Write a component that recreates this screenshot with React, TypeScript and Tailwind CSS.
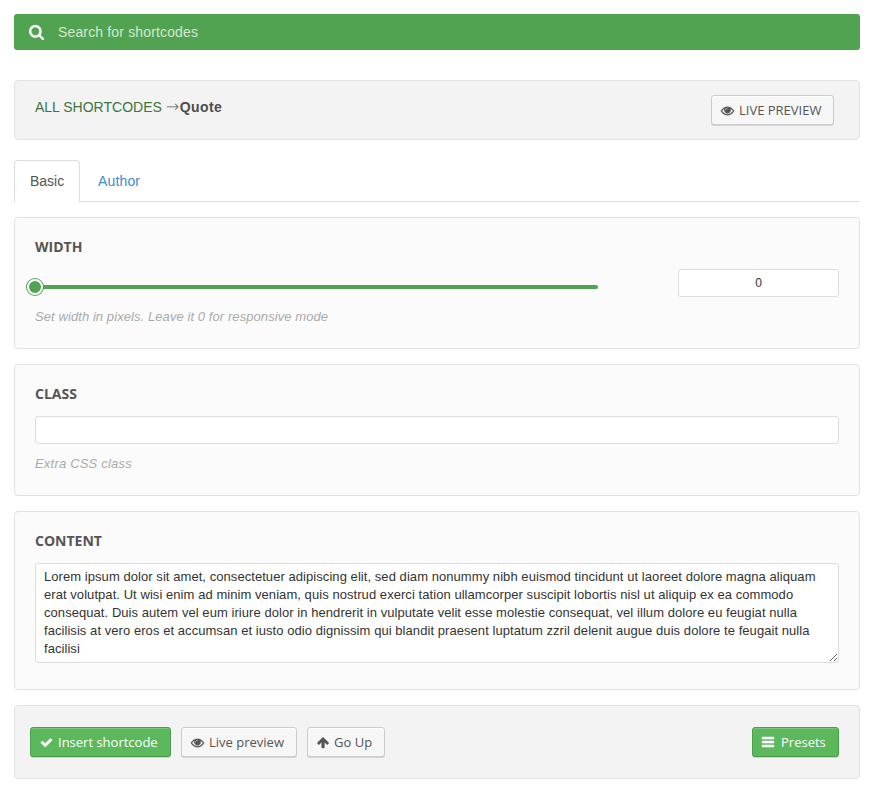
import React, { useState } from "react";

const PATHS = {
  search:
    "M1216 832q0-185-131.5-316.5t-316.5-131.5-316.5 131.5-131.5 316.5 131.5 316.5 316.5 131.5 316.5-131.5 131.5-316.5zm512 832q0 52-38 90t-90 38q-54 0-90-38l-343-342q-179 124-399 124-143 0-273.5-55.5t-225-150-150-225-55.5-273.5 55.5-273.5 150-225 225-150 273.5-55.5 273.5 55.5 225 150 150 225 55.5 273.5q0 220-124 399l343 343q37 37 37 90z",
  eye: "M1664 960q-152-236-381-353 61 104 61 225 0 185-131.5 316.5t-316.5 131.5-316.5-131.5-131.5-316.5q0-121 61-225-229 117-381 353 133 205 333.5 326.5t434.5 121.5 434.5-121.5 333.5-326.5zm-720-384q0-20-14-34t-34-14q-125 0-214.5 89.5t-89.5 214.5q0 20 14 34t34 14 34-14 14-34q0-86 61-147t147-61q20 0 34-14t14-34zm848 384q0 34-20 69-140 230-376.5 368.5t-499.5 138.5-499.5-139-376.5-368q-20-35-20-69t20-69q140-229 376.5-368t499.5-139 499.5 139 376.5 368q20 35 20 69z",
  check:
    "M1671 566q0 40-28 68l-724 724-136 136q-28 28-68 28t-68-28l-136-136-362-362q-28-28-28-68t28-68l136-136q28-28 68-28t68 28l294 295 656-657q28-28 68-28t68 28l136 136q28 28 28 68z",
  arrowUp:
    "M1675 971q0 51-37 90l-75 75q-38 38-91 38-54 0-90-38l-294-293v704q0 52-37.5 84.5t-90.5 32.5h-128q-53 0-90.5-32.5t-37.5-84.5v-704l-294 293q-36 38-90 38t-90-38l-75-75q-38-38-38-90 0-53 38-91l651-651q35-37 90-37 54 0 91 37l651 651q37 39 37 91z",
  bars: "M1664 1344v128q0 26-19 45t-45 19h-1408q-26 0-45-19t-19-45v-128q0-26 19-45t45-19h1408q26 0 45 19t19 45zm0-512v128q0 26-19 45t-45 19h-1408q-26 0-45-19t-19-45v-128q0-26 19-45t45-19h1408q26 0 45 19t19 45zm0-512v128q0 26-19 45t-45 19h-1408q-26 0-45-19t-19-45v-128q0-26 19-45t45-19h1408q26 0 45 19t19 45z",
};

const BOXES = {
  search: "64 128 1664 1664",
  eye: "0 0 1792 1792",
  check: "0 0 1792 1792",
  arrowUp: "64 0 1792 1792",
  bars: "128 0 1792 1792",
};

const STROKES = { search: 20, eye: 50, check: 40, arrowUp: 50, bars: 70 };

function Icon({ name, className }: { name: keyof typeof PATHS; className: string }) {
  return (
    <svg
      viewBox={BOXES[name]}
      className={`overflow-visible ${className}`}
      fill="currentColor"
      stroke="currentColor"
      strokeWidth={STROKES[name]}
    >
      <path d={PATHS[name]} />
    </svg>
  );
}

function Button({
  icon,
  primary,
  className,
  iconClass = "mr-[5.5px] size-[13px]",
  children,
}: {
  icon: keyof typeof PATHS;
  primary?: boolean;
  className: string;
  iconClass?: string;
  children: React.ReactNode;
}) {
  const tone = primary
    ? "border-[#4a9f4a] bg-[#5cb85c] text-white shadow-[inset_0_1px_0_#79c879,0_1px_0_#d0d0d0]"
    : "border-[#cccccc] bg-[#f7f7f7] text-[#555555] shadow-[inset_0_1px_0_#ffffff,0_1px_0_#d4d4d4]";
  return (
    <button
      className={`flex h-[30px] items-center rounded-[3px] border pl-[8.5px] font-['Open_Sans',sans-serif] text-[13px] whitespace-nowrap ${tone} ${className}`}
    >
      <Icon name={icon} className={`shrink-0 ${iconClass}`} />
      <span className="pt-[2px]">{children}</span>
    </button>
  );
}

function Panel({ title, className, children }: { title: string; className: string; children: React.ReactNode }) {
  return (
    <section className={`mt-[15px] rounded-[4px] border border-[#e2e2e2] bg-[#fbfbfb] px-5 pt-5 ${className}`}>
      <h2 className="font-['Open_Sans',sans-serif] text-[14px] leading-[18px] font-bold text-[#555555] uppercase">
        {title}
      </h2>
      {children}
    </section>
  );
}

const LOREM =
  "Lorem ipsum dolor sit amet, consectetuer adipiscing elit, sed diam nonummy nibh euismod tincidunt ut laoreet dolore magna aliquam erat volutpat. Ut wisi enim ad minim veniam, quis nostrud exerci tation ullamcorper suscipit lobortis nisl ut aliquip ex ea commodo consequat. Duis autem vel eum iriure dolor in hendrerit in vulputate velit esse molestie consequat, vel illum dolore eu feugiat nulla facilisis at vero eros et accumsan et iusto odio dignissim qui blandit praesent luptatum zzril delenit augue duis dolore te feugait nulla facilisi";

export default function App() {
  const [width, setWidth] = useState("0");
  return (
    <main className="min-h-[808px] bg-white px-[14px] pt-[14px] font-['Liberation_Sans',Arial,sans-serif] text-[14px]">
      <div className="flex h-9 items-center rounded-[3px] bg-[#51a351] pl-[15px] text-white">
        <Icon name="search" className="size-[15px] shrink-0" />
        <input
          placeholder="Search for shortcodes"
          className="ml-[14px] h-9 flex-1 bg-transparent text-[14px] tracking-[0.15px] outline-none placeholder:text-[#d3e8d3]"
        />
      </div>

      <header className="mt-[30px] flex h-[60px] items-start justify-between rounded-[4px] border border-[#e2e2e2] bg-[#f3f3f3] pt-[14px] pr-[25px] pl-5">
        <div className="flex pt-[2px] leading-5 whitespace-pre text-[#4d4d4d]">
          <a className="text-[#3c763d]">ALL SHORTCODES </a>
          <span className="w-[14px] font-['DejaVu_Sans',sans-serif] text-[16px] font-extralight text-[#666655]">→</span>
          <b className="tracking-[0.4px]">Quote</b>
        </div>
        <Button icon="eye" className="w-[123px]">
          LIVE PREVIEW
        </Button>
      </header>

      <nav className="mt-5 flex h-[42px] border-b border-[#dddddd]">
        <a className="-mb-px h-[42px] w-[66px] rounded-t-[4px] border border-b-0 border-[#dddddd] bg-white pl-[15px] leading-[41px] text-[#555555]">
          Basic
        </a>
        <a className="ml-[18px] leading-[43px] tracking-[0.15px] text-[#428bca]">Author</a>
      </nav>

      <Panel title="Width" className="h-[132px]">
        <div className="mt-[13px] flex justify-between">
          <div className="relative mt-4 h-1 w-[563px] rounded-[2px] bg-[#51a351]">
            <span className="absolute top-[-6px] left-[-8px] size-4 rounded-full border-2 border-white bg-[#51a351] shadow-[0_0_0_1px_#51a351]" />
          </div>
          <input
            value={width}
            onChange={(e) => setWidth(e.target.value)}
            className="h-7 w-[161px] rounded-[3px] border border-[#dddddd] bg-white text-center text-[12px] text-[#333333]"
          />
        </div>
        <p className="mt-[10px] text-[13px] leading-5 tracking-[0.08px] text-[#aaaaaa] italic">
          Set width in pixels. Leave it 0 for responsive mode
        </p>
      </Panel>

      <Panel title="Class" className="h-[132px]">
        <input className="mt-[13px] block h-7 w-full rounded-[3px] border border-[#dddddd] bg-white px-2" />
        <p className="mt-[10px] text-[13px] leading-5 tracking-[0.2px] text-[#aaaaaa] italic">Extra CSS class</p>
      </Panel>

      <Panel title="Content" className="h-[179px]">
        <textarea
          defaultValue={LOREM}
          className="mt-[13px] block h-[100px] w-full resize overflow-hidden rounded-[3px] border border-[#dddddd] bg-white px-2 pt-1 text-[13px] leading-[18px] tracking-[0.06px] text-[#333333]"
        />
      </Panel>

      <footer className="mt-[15px] flex h-[74px] items-center rounded-[4px] border border-[#e2e2e2] bg-[#f3f3f3] pr-5 pl-[15px]">
        <Button icon="check" primary className="w-[141px]">
          Insert shortcode
        </Button>
        <Button icon="eye" className="ml-[10px] w-[116px]">
          Live preview
        </Button>
        <Button icon="arrowUp" className="ml-[10px] w-[78px]" iconClass="mr-[4.5px] size-[13px]">
          Go Up
        </Button>
        <Button icon="bars" primary className="ml-auto w-[87px]" iconClass="mr-[5.5px] size-[14px]">
          Presets
        </Button>
      </footer>
    </main>
  );
}
